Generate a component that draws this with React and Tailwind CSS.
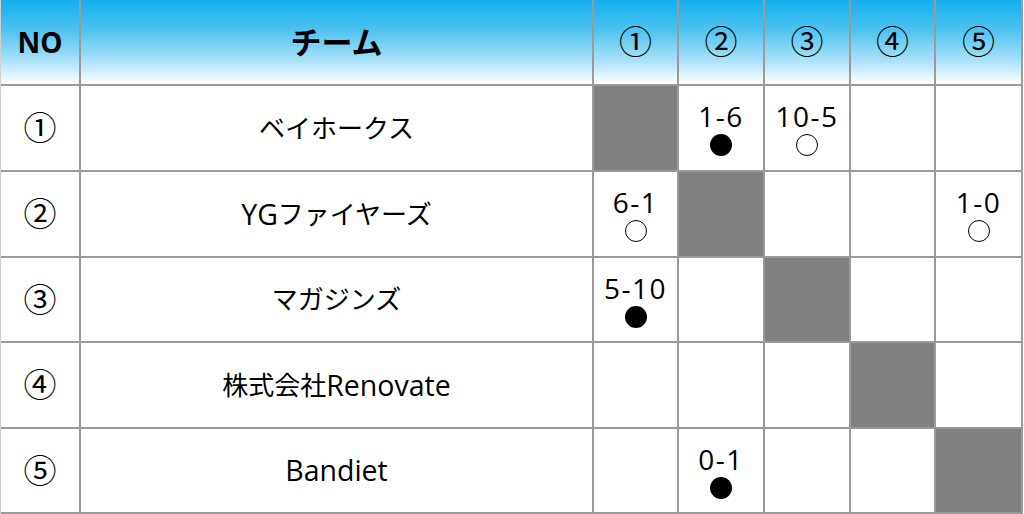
import React from 'react'

// name parts: [text, isLatin]
const teams = [
  { no: '①', name: [['ベイホークス', false]] },
  { no: '②', name: [['YG', true], ['ファイヤーズ', false]] },
  { no: '③', name: [['マガジンズ', false]] },
  { no: '④', name: [['株式会社', false], ['Renovate', true]] },
  { no: '⑤', name: [['Bandiet', true]] },
]

// results[row][col] : null = empty, 'x' = self match
const results = [
  ['x', { s: '1-6', w: false }, { s: '10-5', w: true }, null, null],
  [{ s: '6-1', w: true }, 'x', null, null, { s: '1-0', w: true }],
  [{ s: '5-10', w: false }, null, 'x', null, null],
  [null, null, null, 'x', null],
  [null, { s: '0-1', w: false }, null, null, 'x'],
]

const cell = 'border-r-2 border-b-2 border-[#9a9a9a] flex items-center justify-center'

function Score({ r }) {
  if (r === 'x') return <div className={`${cell} bg-[#808080] border-[#6f6f6f]`} />
  if (!r) return <div className={`${cell} bg-white`} />
  return (
    <div className={`${cell} bg-white flex-col`}>
      <span className="text-[28px] leading-[32px] tracking-[1.5px]">{r.s}</span>
      <span
        className={`mt-[2px] w-[22px] h-[22px] rounded-full ${
          r.w ? 'border-[1.5px] border-black bg-white' : 'bg-black'
        }`}
      />
    </div>
  )
}

export default function App() {
  const head = 'border-r-2 border-b-2 border-[#9a9a9a] flex items-center justify-center bg-[linear-gradient(to_bottom,#12afec_0%,#4cc2f0_35%,#a9e1f8_72%,#ffffff_100%)]'
  return (
    <div className="w-[1024px] h-[514px] bg-white overflow-hidden text-black font-['Open_Sans','Noto_Sans_CJK_JP',sans-serif]">
      <div className="grid grid-cols-[80px_513px_85px_86px_86px_85px_87px] grid-rows-[86px_86px_86px_85px_86px_85px] border-l border-[#d0d0d0]">
        <div className={`${head} text-[28px] font-bold`}>NO</div>
        <div className={`${head} text-[31px] font-bold`}>チーム</div>
        {teams.map((t) => (
          <div key={t.no} className={`${head} text-[33px]`}>{t.no}</div>
        ))}
        {teams.map((t, i) => (
          <React.Fragment key={t.no}>
            <div className={`${cell} text-[33px]`}>{t.no}</div>
            <div className={`${cell} text-[26px]`}>
              {t.name.map(([txt, latin]) => (
                <span key={txt} className={latin ? 'text-[28.5px]' : ''}>{txt}</span>
              ))}
            </div>
            {results[i].map((r, j) => (
              <Score key={j} r={r} />
            ))}
          </React.Fragment>
        ))}
      </div>
    </div>
  )
}
